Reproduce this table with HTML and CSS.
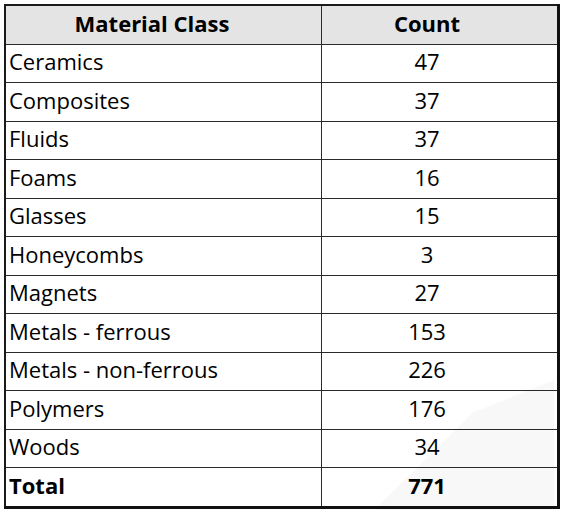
FILE: index.html
```html
<!DOCTYPE html>
<html>
<head>
<meta charset="utf-8">
<link rel="stylesheet" href="styles.css">
</head>
<body>
<div class="page">
<table class="mat">
<thead>
<tr><th class="c1">Material Class</th><th class="c2">Count</th></tr>
</thead>
<tbody>
<tr><td class="c1">Ceramics</td><td class="c2">47</td></tr>
<tr><td class="c1">Composites</td><td class="c2">37</td></tr>
<tr><td class="c1">Fluids</td><td class="c2">37</td></tr>
<tr><td class="c1">Foams</td><td class="c2">16</td></tr>
<tr><td class="c1">Glasses</td><td class="c2">15</td></tr>
<tr><td class="c1">Honeycombs</td><td class="c2">3</td></tr>
<tr><td class="c1">Magnets</td><td class="c2">27</td></tr>
<tr><td class="c1">Metals - ferrous</td><td class="c2">153</td></tr>
<tr><td class="c1">Metals - non-ferrous</td><td class="c2">226</td></tr>
<tr><td class="c1">Polymers</td><td class="c2">176</td></tr>
<tr><td class="c1">Woods</td><td class="c2">34</td></tr>
<tr class="total"><td class="c1">Total</td><td class="c2">771</td></tr>
</tbody>
</table>
<div class="mark"></div>
</div>
</body>
</html>
```

FILE: styles.css
```css
html, body {
  margin: 0;
  padding: 0;
  background: #ffffff;
}
.page {
  position: relative;
  padding: 4px;
  width: 564px;
  height: 510px;
  box-sizing: border-box;
}
.mat {
  border-collapse: collapse;
  width: 556px;
  font-family: "Open Sans", "Noto Sans", sans-serif;
  font-size: 22px;
  color: #000;
  position: relative;
  z-index: 1;
}
.mat th, .mat td {
  border: 1px solid #2a2a2a;
  height: 33.5px;
  padding: 0 3px 4px 3px;
  line-height: 26px;
}
.mat th {
  background: #e4e4e4;
  font-weight: 700;
  text-align: center;
}
.mat th.c1 {
  width: 286px;
  padding-right: 26px;
}
.mat td.c1 {
  text-align: left;
}
.mat .c2 {
  text-align: center;
  padding-right: 28px;
}
.mat tr.total td {
  font-weight: 700;
}
.mat thead tr th {
  border-top: 2px solid #1a1a1a;
}
.mat th:first-child, .mat td:first-child {
  border-left: 2px solid #1a1a1a;
}
.mat th:last-child, .mat td:last-child {
  border-right: 3px solid #111;
}
.mat tr.total td {
  border-bottom: 3px solid #111;
}
.mark {
  position: absolute;
  right: 10px;
  bottom: 0;
  width: 180px;
  height: 130px;
  background: #f3f3f3;
  clip-path: polygon(100% 0, 100% 100%, 0 100%, 55% 25%);
  opacity: 0.6;
}
```
